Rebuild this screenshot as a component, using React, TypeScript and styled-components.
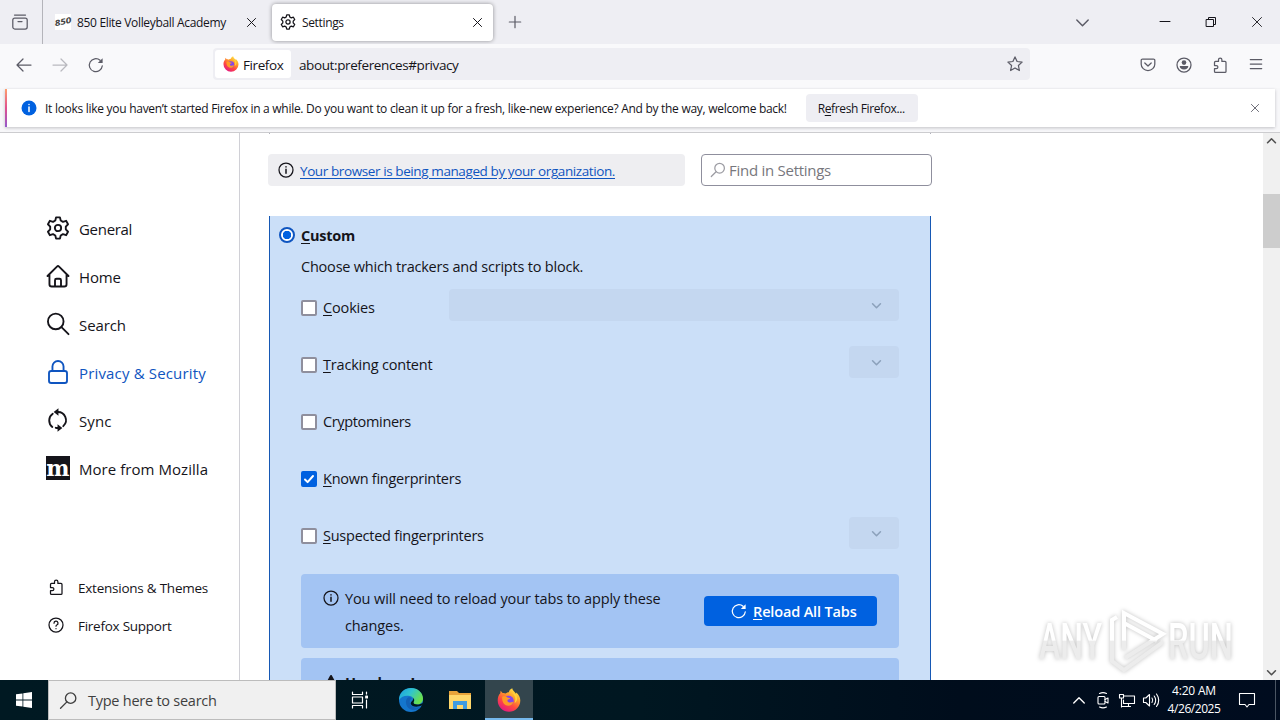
import type { ReactNode } from 'react';
import styled, { createGlobalStyle, css } from 'styled-components';

const color = {
    text: '#15141a',
    icon: '#5b5b66',
    blue: '#0061e0',
    link: '#0f55c0',
    strip: '#eeeef3',
    toolbar: '#f9f9fb',
    card: '#cbdff8',
    message: '#a3c4f3',
};

const GlobalStyle = createGlobalStyle`
    * { box-sizing: border-box; }
    body {
        margin: 0;
        overflow: hidden;
        background: white;
        color: ${color.text};
        font-family: "Open Sans", "Noto Sans", sans-serif;
        font-size: 14px;
    }
    svg { display: block; flex: none; overflow: visible; }
`;

interface IconProps {
    size?: number;
    stroke?: number;
    box?: number;
    children: ReactNode;
}

function Icon({ size = 16, stroke = 1.25, box = 16, children }: IconProps) {
    return (
        <svg width={size} height={size} viewBox={`0 0 ${box} ${box}`} fill="none" stroke="currentColor"
            strokeWidth={stroke} strokeLinecap="round" strokeLinejoin="round">
            {children}
        </svg>
    );
}

const GearIcon = ({ size = 16 }: { size?: number }) => (
    <Icon size={size}>
        <path d="M6.700 .9h2.600l.5 2.100 1.500.9 2.100-.7 1.300 2.300-1.500 1.600v1.800l1.500 1.600-1.300 2.300-2.100-.7-1.500.9-.5 2.100H6.700l-.5-2.100-1.500-.9-2.100.7-1.300-2.300 1.500-1.600V7.100L1.300 5.500l1.300-2.300 2.100.7 1.500-.9z" />
        <circle cx="8" cy="8" r="2.1" />
    </Icon>
);

const PuzzleIcon = ({ size = 16 }: { size?: number }) => (
    <Icon size={size}>
        <path d="M2.500 5.400a1 1 0 0 1 1-1h3V2.800a1.700 1.700 0 0 1 3.400 0v1.600h3.100a1 1 0 0 1 1 1v9a1 1 0 0 1-1 1H3.500a1 1 0 0 1-1-1v-2.700h1.800a1.500 1.500 0 0 0 0-3.200H2.500z" />
    </Icon>
);

const CloseIcon = ({ size = 9, stroke = 1.1 }: { size?: number; stroke?: number }) => (
    <Icon size={size} box={10} stroke={stroke}><path d="M.5 .5l9 9M9.500 .5l-9 9" /></Icon>
);

const ReloadIcon = () => (
    <Icon>
        <path d="M14.300 8.800a6.500 6.500 0 1 1-2.200-5.500" />
        <path d="M14.600 1.300v4.800H9.800z" fill="currentColor" stroke="none" />
    </Icon>
);

const InfoIcon = () => (
    <Icon><circle cx="8" cy="8" r="7" /><path d="M8 7.300v3.900M8 4.800v.1" stroke="currentColor" strokeWidth="1.500" /></Icon>
);

const ChevronIcon = ({ size = 8, up = false }: { size?: number; up?: boolean }) => (
    <Icon size={size} box={8} stroke={size > 10 ? 0.9 : 1.4}><path d={up ? 'M.5 6l3.500-3.500L7.500 6' : 'M.5 2.500L4 6l3.500-3.500'} /></Icon>
);

const SearchIcon = () => (
    <Icon><circle cx="9.600" cy="6.200" r="4.800" /><path d="M6.100 9.700L1.300 14.500" /></Icon>
);

const FirefoxLogo = ({ size }: { size: number }) => (
    <svg width={size} height={size} viewBox="0 0 24 24">
        <defs>
            <linearGradient id="fx" x1="0.85" y1="0" x2="0.25" y2="1">
                <stop offset="0" stopColor="#fff44f" />
                <stop offset=".35" stopColor="#ffa22b" />
                <stop offset=".65" stopColor="#ff4a3f" />
                <stop offset="1" stopColor="#e31587" />
            </linearGradient>
        </defs>
        <path fill="url(#fx)" d="M15.200 .3c.3 2.300 2.400 3.500 3.800 5.400l.3-1.300c2.600 2.200 4 5 4 8.100A11.300 11.300 0 0 1 12 23.700 11.300 11.300 0 0 1 .7 12.500c0-3.500 1-5.600 2.600-7.300l.3-2.400 2 2.200c1.300-.2 2.300.1 3 .5 1-1 2.400-1.200 3.300-1.300C12 2.600 13.600 1 15.200 .3z" />
        <circle cx="11.800" cy="12.600" r="4.900" fill="#8446e8" />
        <path fill="#ff9a25" d="M5.200 8.800c2.200-1 4.300-.3 5.800 1l2.200.3c-.1 1-1.800 1.300-2.700 1.800-.4 1.800.9 2.900 2.600 2.600 1.500-.3 2.400-.8 3.200-.4-.7 2.400-2.700 3.800-5 3.700-3.800-.1-6.600-3.400-6.100-9z" />
        <path fill="#ffd43a" d="M15 4.300c2.800 2.800 4.400 6.500 2.600 10.700 2.200-1 3.500-4 1.500-8.400z" />
    </svg>
);

const Window = styled.div`
    width: 1280px;
    height: 720px;
    display: flex;
    flex-direction: column;
    overflow: hidden;
    position: relative;
`;

const Label = styled.span<{ $size?: number; $track?: number; $weight?: number }>`
    font-size: ${({ $size = 14 }) => $size}px;
    letter-spacing: ${({ $track = 0 }) => $track}px;
    font-weight: ${({ $weight = 400 }) => $weight};
    line-height: 20px;
    white-space: nowrap;
    u { text-underline-offset: 2px; text-decoration-thickness: 1px; }
`;

const TabStrip = styled.div`
    height: 44px;
    flex: none;
    display: flex;
    align-items: center;
    background: ${color.strip};
    color: ${color.text};
`;

const RecentButton = styled.div`
    width: 43px;
    height: 44px;
    display: flex;
    align-items: center;
    padding-left: 12px;
    color: ${color.icon};
    border-right: 1px solid #b4b4ba;
`;

const Tab = styled.div<{ $active?: boolean }>`
    width: ${({ $active }) => ($active ? 221 : 225)}px;
    height: 37px;
    margin-left: ${({ $active }) => ($active ? 4 : 0)}px;
    padding: 0 ${({ $active }) => ($active ? 11 : 12)}px 0 ${({ $active }) => ($active ? 8 : 12)}px;
    display: flex;
    align-items: center;
    gap: 6px;
    border-radius: 4px;
    ${({ $active }) => $active && css`
        background: white;
        box-shadow: 0 0 4px rgba(0, 0, 0, 0.4);
    `}
    > span { margin-top: 2px; }
    > svg:last-child { margin-left: auto; }
`;

const NewTab = styled.div`
    margin-left: 16px;
    color: ${color.icon};
`;

const WindowControls = styled.div`
    margin-left: auto;
    display: flex;
    align-items: center;
    > * { width: 46px; display: flex; justify-content: center; }
    > :first-child { margin-right: 37px; color: ${color.icon}; }
`;

const Toolbar = styled.div`
    height: 44px;
    flex: none;
    display: flex;
    align-items: center;
    padding: 0 16px 2px;
    background: ${color.toolbar};
    color: ${color.icon};
`;

const IconGroup = styled.div`
    display: flex;
    gap: 20px;
    > .disabled { opacity: 0.4; }
`;

const UrlBar = styled.div`
    width: 817px;
    height: 32px;
    margin: -2px 110px 0 109px;
    padding: 0 7px 0 2px;
    display: flex;
    align-items: center;
    border-radius: 4px;
    background: ${color.strip};
    > span { color: ${color.text}; margin-top: 2px; }
    > svg:last-child { margin-left: auto; }
`;

const Identity = styled.div`
    width: 76px;
    height: 28px;
    margin-right: 8px;
    padding-left: 8px;
    display: flex;
    align-items: center;
    gap: 4px;
    border-radius: 3px;
    background: white;
    color: ${color.text};
    > span { margin-top: 2px; }
`;

const NotificationArea = styled.div`
    height: 45px;
    flex: none;
    padding: 1px 5px 5px;
    background: #f7f7f9;
    border-bottom: 1px solid #cccccf;
`;

const Notification = styled.div`
    height: 38px;
    display: flex;
    align-items: center;
    padding: 0 16px 0 14px;
    border-left: 2px solid;
    border-image: linear-gradient(#ffa26b, #e0508f, #9059ce) 1;
    background: white;
    box-shadow: 0 1px 3px rgba(58, 57, 68, 0.28);
    > span { margin-top: 2px; }
    > svg:first-child { margin-right: 8px; }
    > svg:last-child { margin-left: auto; color: ${color.icon}; }
`;

const RefreshButton = styled.div`
    width: 112px;
    height: 28px;
    margin-left: 19px;
    padding-top: 2px;
    padding-right: 1px;
    display: flex;
    align-items: center;
    justify-content: center;
    border-radius: 4px;
    background: ${color.strip};
`;

const Page = styled.div`
    height: 547px;
    flex: none;
    display: flex;
    overflow: hidden;
`;

const Sidebar = styled.nav`
    width: 240px;
    flex: none;
    display: flex;
    flex-direction: column;
    padding: 71px 0 36px 46px;
    border-right: 1px solid #d0d0d6;
`;

const Category = styled.div<{ $selected?: boolean }>`
    height: 48px;
    display: flex;
    align-items: center;
    gap: 9px;
    color: ${({ $selected }) => ($selected ? color.link : color.text)};
    > span { margin-top: 1px; }
`;

const SideLinks = styled.div`
    margin-top: auto;
    > div { height: 38px; display: flex; align-items: center; gap: 14px; padding-left: 2px; }
    span { margin-top: 2px; }
`;

const MozillaMark = styled.div`
    width: 24px;
    height: 24px;
    display: flex;
    align-items: center;
    justify-content: center;
    background: ${color.text};
    color: white;
    font: bold 22px/16px "DejaVu Serif", serif;
`;

const Main = styled.main`
    width: 664px;
    margin-left: 28px;
    display: flex;
    flex-direction: column;
`;

const PreviousCard = styled.div`
    height: 1px;
    flex: none;
    margin: 0 1px 20px;
    border: solid #b0b0ba;
    border-width: 0 1px;
`;

const StickyHeader = styled.div`
    height: 32px;
    flex: none;
    display: flex;
    gap: 16px;
`;

const ManagedNotice = styled.div`
    width: 417px;
    padding-left: 10px;
    display: flex;
    align-items: center;
    gap: 6px;
    border-radius: 4px;
    background: #eeeef1;
    > span { color: ${color.link}; text-decoration: underline; text-underline-offset: 2px; margin-top: 2px; }
`;

const SearchField = styled.div`
    flex: 1;
    padding-left: 8px;
    display: flex;
    align-items: center;
    gap: 3px;
    border: 1px solid #8f8f9d;
    border-radius: 4px;
    color: #77777d;
    > svg { color: #9c9ca3; }
`;

const CustomCard = styled.section`
    height: 520px;
    flex: none;
    margin: 30px 1px 0;
    padding: 9px 31px 0 9px;
    background: ${color.card};
    border: solid #1658b4;
    border-width: 0 1px;
`;

const RadioRow = styled.div`
    display: flex;
    align-items: center;
    gap: 6px;
    height: 20px;
    > span:last-child { margin-top: 2px; }
`;

const Radio = styled.span`
    width: 16px;
    height: 16px;
    border-radius: 50%;
    border: 2px solid ${color.link};
    background: radial-gradient(circle, ${color.blue} 0 4px, white 4.5px);
`;

const CardBody = styled.div`
    margin-left: 22px;
`;

const Description = styled.p`
    height: 20px;
    margin: 12px 0;
`;

const OptionRow = styled.div`
    height: 32px;
    margin-bottom: 25px;
    display: flex;
    align-items: flex-start;
`;

const CheckLabel = styled.div`
    display: flex;
    align-items: flex-start;
    gap: 6px;
    padding-top: 9px;
    > i { margin-top: 2px; }
`;

const Checkbox = styled.i<{ $checked?: boolean }>`
    width: 16px;
    height: 16px;
    border: 2px solid ${({ $checked }) => ($checked ? color.blue : '#8f8f9d')};
    border-radius: 2px;
    background: ${({ $checked }) => ($checked ? color.blue : 'white')};
    color: white;
`;

const Select = styled.div<{ $width: number }>`
    width: ${({ $width }) => $width}px;
    height: 32px;
    margin-left: auto;
    padding-right: 18px;
    display: flex;
    align-items: center;
    justify-content: flex-end;
    border-radius: 4px;
    background: #c4d7f0;
    color: #8ca1bb;
`;

const MessageBox = styled.div`
    height: 74px;
    margin-bottom: 10px;
    padding: 11px 22px;
    display: flex;
    gap: 6px;
    border-radius: 4px;
    background: ${color.message};
    > svg { margin-top: 5px; }
`;

const MessageText = styled.div`
    > span { display: block; line-height: 27px; }
`;

const ReloadButton = styled.div`
    width: 173px;
    height: 30px;
    margin: 11px 0 0 auto;
    padding-left: 27px;
    display: flex;
    align-items: center;
    gap: 6px;
    border-radius: 4px;
    background: ${color.blue};
    color: white;
    > span { margin-top: 2px; }
`;

const Scrollbar = styled.div`
    width: 17px;
    margin-left: auto;
    display: flex;
    flex-direction: column;
    align-items: center;
    justify-content: space-between;
    padding: 3px 0;
    background: #f0f0f0;
    color: #505050;
`;

const Thumb = styled.div`
    width: 17px;
    height: 54px;
    margin: 49px 0 auto;
    background: #cdcdcd;
`;

const Watermark = styled.svg`
    position: absolute;
    left: 1032px;
    top: 604px;
    filter: drop-shadow(0 0 2px rgba(0, 0, 0, 0.25));
`;

const Taskbar = styled.footer`
    height: 40px;
    flex: none;
    display: flex;
    align-items: center;
    background: linear-gradient(90deg, #001922, #001721 50%, #000d1c 75%, #000c1f);
    color: white;
`;

const StartButton = styled.div`
    width: 48px;
    padding-left: 16px;
`;

const TaskSearch = styled.div`
    width: 288px;
    height: 40px;
    padding-left: 11px;
    display: flex;
    align-items: center;
    gap: 11px;
    background: #f0f0f0;
    border: 1px solid #bcbcbc;
    color: #3f3f3f;
    > span { margin-top: 2px; }
`;

const TaskButton = styled.div<{ $active?: boolean; $width?: number }>`
    width: ${({ $width = 48 }) => $width}px;
    height: 40px;
    display: flex;
    align-items: center;
    justify-content: center;
    ${({ $active }) => $active && css`
        margin-left: 2px;
        background: #33454d;
        border-bottom: 2px solid #76b9ed;
        padding-top: 2px;
    `}
`;

const Tray = styled.div`
    margin-left: auto;
    height: 40px;
    display: flex;
    align-items: center;
    gap: 8px;
    > svg:first-child { margin-right: 2px; }
`;

const Clock = styled.div`
    width: 68px;
    margin: 0 3px 0 -7px;
    display: flex;
    flex-direction: column;
    align-items: center;
    > span { line-height: 18px; }
`;

const ShowDesktop = styled.div`
    width: 5px;
    height: 40px;
    margin-left: 12px;
    border-left: 1px solid #4a5563;
`;

interface TrackerOption {
    before?: string;
    accessKey: string;
    after: string;
    track: number;
    checked?: boolean;
    select?: number;
}

const options: TrackerOption[] = [
    { accessKey: 'C', after: 'ookies', track: -0.15, select: 450 },
    { accessKey: 'T', after: 'racking content', track: -0.2, select: 50 },
    { before: 'Cr', accessKey: 'y', after: 'ptominers', track: -0.35 },
    { accessKey: 'K', after: 'nown fingerprinters', track: -0.26, checked: true },
    { accessKey: 'S', after: 'uspected fingerprinters', track: -0.24, select: 50 },
];

const categories = [
    { name: 'General', track: -0.3, icon: <GearIcon size={24} /> },
    {
        name: 'Home', track: -0.15,
        icon: <Icon size={24}><path d="M1 8l6.300-6.300a1 1 0 0 1 1.400 0L15 8M2.300 7v6.500a1.500 1.500 0 0 0 1.500 1.500h8.400a1.500 1.500 0 0 0 1.500-1.500V7M6 14.800v-4a1 1 0 0 1 1-1h2a1 1 0 0 1 1 1v4" /></Icon>,
    },
    { name: 'Search', track: -0.1, icon: <Icon size={24}><circle cx="6.500" cy="6.300" r="5.200" /><path d="M10.300 10.100l4.700 4.700" /></Icon> },
    {
        name: 'Privacy & Security', track: 0.16, selected: true,
        icon: <Icon size={24}><rect x="2" y="7.300" width="12" height="8" rx="1.500" /><path d="M4.300 7V4.400a3.700 3.700 0 0 1 7.400 0V7" /></Icon>,
    },
    {
        name: 'Sync', track: 0.1,
        icon: (
            <Icon size={24}>
                <path d="M4.200 12.600A5.400 5.400 0 0 1 4.500 3.900M7.500 2.700a5.400 5.400 0 0 1 4 9.400M8.500 13.300a5.400 5.400 0 0 1-2-.1" />
                <path d="M8.300 .2v5L5.100 2.700zM7.700 10.800v5l3.200-2.500z" fill="currentColor" stroke="none" />
            </Icon>
        ),
    },
    { name: 'More from Mozilla', track: 0.05, icon: <MozillaMark>m</MozillaMark> },
];

function BrowserChrome() {
    return (
        <>
            <TabStrip>
                <RecentButton>
                    <Icon><rect x=".8" y="4" width="14.400" height="11" rx="2" /><path d="M2.500 1h11M6 7.500h4" /></Icon>
                </RecentButton>
                <Tab>
                    <svg width="16" height="16" viewBox="0 0 16 16">
                        <rect width="16" height="16" fill="white" />
                        <text x="-.5" y="10.500" fontSize="8" fontWeight="700" fontStyle="italic" fill="#444" transform="rotate(-12 8 8)" textLength="17" lengthAdjust="spacingAndGlyphs">850</text>
                    </svg>
                    <Label $size={12} $track={-0.33}>850 Elite Volleyball Academy</Label>
                    <CloseIcon />
                </Tab>
                <Tab $active>
                    <GearIcon />
                    <Label $size={12} $track={-0.35}>Settings</Label>
                    <CloseIcon />
                </Tab>
                <NewTab><Icon size={12} box={12} stroke={1.2}><path d="M6 .3v11.400M.3 6h11.400" /></Icon></NewTab>
                <WindowControls>
                    <div><ChevronIcon size={13} /></div>
                    <div><Icon size={10} box={10} stroke={1}><path d="M0 4.500h10" /></Icon></div>
                    <div><Icon size={10} box={10} stroke={1}><path d="M.5 2.500h7v7h-7zM2.500 2.500v-2h7v7h-2" /></Icon></div>
                    <div><CloseIcon size={10} stroke={0.9} /></div>
                </WindowControls>
            </TabStrip>
            <Toolbar>
                <IconGroup>
                    <Icon><path d="M1 8h14M7 2L1 8l6 6" /></Icon>
                    <div className="disabled"><Icon><path d="M1 8h14M9 2l6 6-6 6" /></Icon></div>
                    <ReloadIcon />
                </IconGroup>
                <UrlBar>
                    <Identity>
                        <FirefoxLogo size={16} />
                        <Label $size={13.5} $track={-0.4}>Firefox</Label>
                    </Identity>
                    <Label $size={13.5} $track={-0.39}>about:preferences#privacy</Label>
                    <Icon><path d="M8 .9l2.100 4.600 5 .6-3.700 3.400 1 5L8 12l-4.400 2.500 1-5L.9 6.100l5-.6z" /></Icon>
                </UrlBar>
                <IconGroup>
                    <Icon><path d="M2.500 2h11a1.300 1.300 0 0 1 1.300 1.300v3.900a6.800 6.300 0 0 1-13.600 0V3.300A1.300 1.300 0 0 1 2.500 2zM4.800 6L8 9l3.200-3" /></Icon>
                    <Icon>
                        <circle cx="8" cy="8" r="7" />
                        <g fill="currentColor" stroke="none"><circle cx="8" cy="5.600" r="2.300" /><path d="M3.700 9h8.600c0 2-1.800 3.600-4.300 3.600S3.700 11 3.700 9z" /></g>
                    </Icon>
                    <PuzzleIcon />
                    <Icon><path d="M2.300 2.500h11.400M2.300 7h11.400M2.300 11.500h11.400" /></Icon>
                </IconGroup>
            </Toolbar>
            <NotificationArea>
                <Notification>
                    <Icon><circle cx="8" cy="8" r="7.500" fill={color.blue} stroke="none" /><path d="M8 7v4.500M8 4.500v.1" stroke="white" strokeWidth="1.500" /></Icon>
                    <Label $size={12} $track={-0.284}>It looks like you haven’t started Firefox in a while. Do you want to clean it up for a fresh, like-new experience? And by the way, welcome back!</Label>
                    <RefreshButton><Label $size={12} $track={-0.38}>R<u>e</u>fresh Firefox...</Label></RefreshButton>
                    <CloseIcon size={8} />
                </Notification>
            </NotificationArea>
        </>
    );
}

function Preferences() {
    return (
        <Page>
            <Sidebar>
                {categories.map(({ name, icon, track, selected }) => (
                    <Category key={name} $selected={selected}>
                        {icon}
                        <Label $size={15} $track={track}>{name}</Label>
                    </Category>
                ))}
                <SideLinks>
                    <div><PuzzleIcon /><Label $size={13.5} $track={-0.24}>Extensions &amp; Themes</Label></div>
                    <div>
                        <Icon><circle cx="8" cy="8" r="7" /><path d="M6 6.200a2 2 0 1 1 2.800 1.800c-.6.300-.8.600-.8 1.200M8 11.600v.1" /></Icon>
                        <Label $size={13.5} $track={-0.26}>Firefox Support</Label>
                    </div>
                </SideLinks>
            </Sidebar>
            <Main>
                <PreviousCard />
                <StickyHeader>
                    <ManagedNotice>
                        <InfoIcon />
                        <Label $size={13.5} $track={-0.4}>Your browser is being managed by your organization.</Label>
                    </ManagedNotice>
                    <SearchField>
                        <SearchIcon />
                        <Label $size={15} $track={-0.27}>Find in Settings</Label>
                    </SearchField>
                </StickyHeader>
                <CustomCard>
                    <RadioRow>
                        <Radio />
                        <Label $size={14.5} $track={-0.25} $weight={700}><u>C</u>ustom</Label>
                    </RadioRow>
                    <CardBody>
                        <Description><Label $size={14.5} $track={-0.21}>Choose which trackers and scripts to block.</Label></Description>
                        {options.map(({ before, accessKey, after, track, checked, select }) => (
                            <OptionRow key={after}>
                                <CheckLabel>
                                    <Checkbox $checked={checked}>
                                        {checked && <Icon size={12} box={12} stroke={2}><path d="M2 6.500l2.600 2.600L10 3" /></Icon>}
                                    </Checkbox>
                                    <Label $size={14.5} $track={track}>{before}<u>{accessKey}</u>{after}</Label>
                                </CheckLabel>
                                {select && <Select $width={select}><ChevronIcon size={9} /></Select>}
                            </OptionRow>
                        ))}
                        <MessageBox>
                            <InfoIcon />
                            <MessageText>
                                <Label $size={14.5} $track={-0.11}>You will need to reload your tabs to apply these</Label>
                                <Label $size={14.5} $track={-0.11}>changes.</Label>
                            </MessageText>
                            <ReloadButton>
                                <ReloadIcon />
                                <Label $size={14.5} $track={-0.15} $weight={600}><u>R</u>eload All Tabs</Label>
                            </ReloadButton>
                        </MessageBox>
                        <MessageBox>
                            <Icon><path d="M8 2l6.500 12h-13z" fill="currentColor" stroke="currentColor" strokeWidth="2" /></Icon>
                            <MessageText><Label $size={14.5} $track={-0.2} $weight={700}>Heads up!</Label></MessageText>
                        </MessageBox>
                    </CardBody>
                </CustomCard>
            </Main>
            <Scrollbar>
                <ChevronIcon size={9} up />
                <Thumb />
                <ChevronIcon size={9} />
            </Scrollbar>
        </Page>
    );
}

function AnyRunMark() {
    return (
        <Watermark width="210" height="72" viewBox="0 0 210 72">
            <defs>
                <linearGradient id="wm" x1="0" y1="0" x2="0" y2="72" gradientUnits="userSpaceOnUse">
                    <stop offset=".5" stopColor="#ffffff" />
                    <stop offset=".52" stopColor="#ececec" />
                </linearGradient>
            </defs>
            <g fill="url(#wm)" fontFamily="Roboto" fontWeight="500" fontSize="50">
                <text x="7" y="55" textLength="63" lengthAdjust="spacingAndGlyphs">ANY</text>
                <text x="136" y="55" textLength="65" lengthAdjust="spacingAndGlyphs">RUN</text>
            </g>
            <g fill="none" stroke="url(#wm)" strokeWidth="4">
                <path d="M92 46V9l39 21-38 24M92 19l33 18M85 13l-5 3v41l12 9 39-28" />
            </g>
        </Watermark>
    );
}

function WindowsTaskbar() {
    return (
        <Taskbar>
            <StartButton>
                <svg width="16" height="16" viewBox="0 0 16 16" fill="white"><path d="M0 2.300l6.500-.9v6.200H0zM7.300 1.300L16 0v7.600H7.300zM0 8.400h6.500v6.200L0 13.700zM7.300 8.400H16V16l-8.700-1.300z" /></svg>
            </StartButton>
            <TaskSearch>
                <Icon size={17}><circle cx="10" cy="5.800" r="4.900" /><path d="M6.500 9.300L.5 15.300" /></Icon>
                <Label $size={14.5} $track={-0.25}>Type here to search</Label>
            </TaskSearch>
            <TaskButton>
                <Icon stroke={1.2}><path d="M.5 0v2.500h10V0M.5 5h10v6H.5zM.5 16v-2.500h10V16M14.500 0v2M14.500 8v8" /><rect x="13.800" y="4" width="1.600" height="2" fill="white" /></Icon>
            </TaskButton>
            <TaskButton $width={53}>
                <svg width="24" height="24" viewBox="0 0 24 24">
                    <defs>
                        <linearGradient id="edgeTop" x1="0" y1="0" x2="1" y2=".5">
                            <stop offset="0" stopColor="#1a9fe0" /><stop offset=".5" stopColor="#30c4cf" /><stop offset="1" stopColor="#6be04c" />
                        </linearGradient>
                    </defs>
                    <circle cx="12" cy="12" r="12" fill="#1476cd" />
                    <path fill="url(#edgeTop)" d="M.2 10C1 4 6 0 12 0c7 0 12 5 12 10.500 0 4-3 6-6.200 6-2.500 0-4-1-3.800-2 1.500-2 .8-5.700-3-6.500C7 7 2 8 .2 12z" />
                    <path fill="#1261b5" d="M9 9.500c-4 3-2 11.500 4.500 12.500 3 .4 6-.6 8.200-3.200-5 2-10.500-.3-11-4.600-.1-2 .9-3.200 2-3.700-.8-1.100-2.400-1.500-3.700-1z" />
                    <path fill="#001721" d="M14.600 14c1-1.500.8-3-.5-4.300 1 3-3 3.800-2.300 6.300 1 2.600 6 3.800 12 1.100V15c-2.500 1.800-9.700 2.500-9.200-1z" />
                </svg>
            </TaskButton>
            <TaskButton $width={46}>
                <svg width="22" height="20" viewBox="0 0 22 20">
                    <path fill="#e8a33a" d="M0 1h8l2 2h12v6H0z" />
                    <path fill="#ffd76b" d="M0 5h22v14H0z" />
                    <path fill="#3f9be0" d="M4 19v-8h14v8h-4v-4H8v4z" />
                </svg>
            </TaskButton>
            <TaskButton $active><FirefoxLogo size={24} /></TaskButton>
            <Tray>
                <ChevronIcon size={12} up />
                <Icon stroke={1.1}><rect x="3" y="4.500" width="7" height="7.500" rx="1" /><path d="M10 7.500l3-1.500v5l-3-1.500M4.500 1.500q3.500-1.700 7 0M4.500 15q3.500 1.700 7 0" /></Icon>
                <Icon stroke={1.1}><path d="M5 4h10.500v7.500H4.500V8M.5 2.500h4v3.500h-4zM2.500 6v9M2.500 14.500h9M9.500 11.500v3" /></Icon>
                <Icon stroke={1.1}><path d="M.5 6v4.500h2.300L6.500 14V2.500L2.800 6zM9 6q1.500 2.200 0 4.500M11.200 4q3 4.200 0 8.500M13.500 2q4.500 6.200 0 12.500" /></Icon>
                <Clock>
                    <Label $size={12} $track={-0.2}>4:20 AM</Label>
                    <Label $size={12} $track={-0.45}>4/26/2025</Label>
                </Clock>
                <Icon stroke={1.1}><path d="M.5 1.500h15v11H10L8 15l-2-2.500H.5z" /></Icon>
                <ShowDesktop />
            </Tray>
        </Taskbar>
    );
}

export default function App() {
    return (
        <Window>
            <GlobalStyle />
            <BrowserChrome />
            <Preferences />
            <WindowsTaskbar />
            <AnyRunMark />
        </Window>
    );
}
